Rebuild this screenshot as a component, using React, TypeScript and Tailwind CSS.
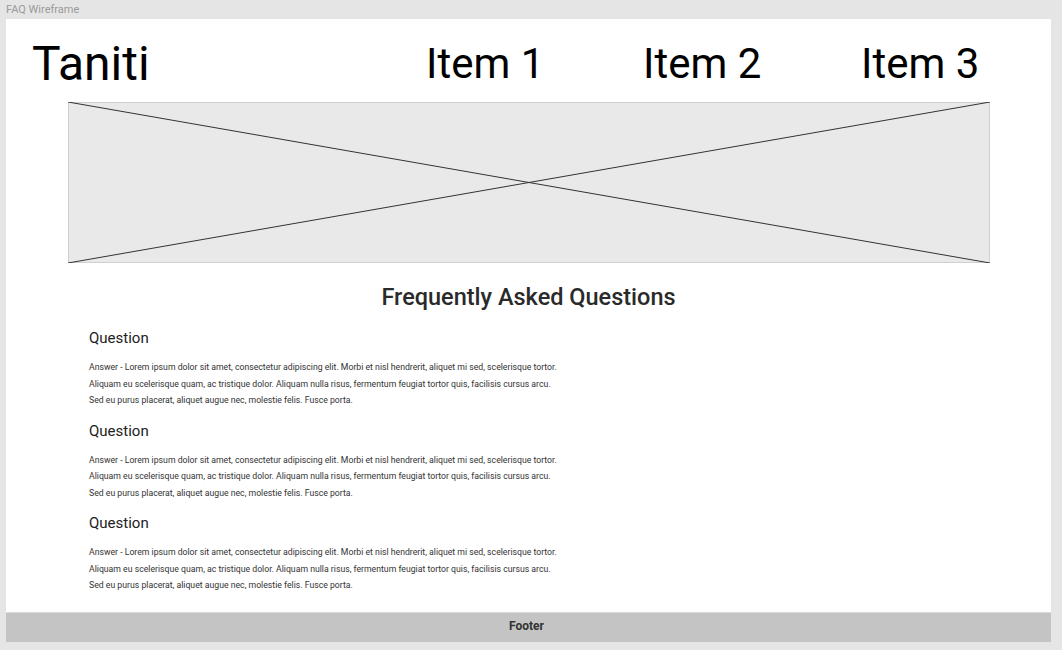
import React from "react";

const answer = [
  "Answer - Lorem ipsum dolor sit amet, consectetur adipiscing elit. Morbi et nisl hendrerit, aliquet mi sed, scelerisque tortor.",
  "Aliquam eu scelerisque quam, ac tristique dolor. Aliquam nulla risus, fermentum feugiat tortor quis, facilisis cursus arcu.",
  "Sed eu purus placerat, aliquet augue nec, molestie felis. Fusce porta.",
];

function QA() {
  return (
    <div className="flex flex-col shrink-0">
      <div className="text-[15px] leading-[20px] font-normal text-[#222]">Question</div>
      <div className="mt-[11px] flex flex-col text-[8.7px] leading-[16.5px] text-[#333]">
        {answer.map((l, i) => (
          <div key={i}>{l}</div>
        ))}
      </div>
    </div>
  );
}

export default function App() {
  return (
    <div
      className="w-[1062px] h-[650px] bg-[#e5e5e5] flex flex-col overflow-hidden"
      style={{ fontFamily: "Roboto, 'Noto Sans', sans-serif" }}
    >
      <div className="h-[19px] shrink-0 pl-[6px] pt-[3px] text-[11px] leading-[14px] text-[#9a9a9a]">FAQ Wireframe</div>
      <div className="ml-[6px] w-[1045px] h-[623px] shrink-0 bg-white flex flex-col">
        <div className="flex items-start h-[83px] shrink-0 pt-[19px]">
          <div className="ml-[26px] w-[394px] text-[48px] leading-[52px] text-black">Taniti</div>
          <div className="w-[217px] text-[42px] leading-[52px] text-black">Item 1</div>
          <div className="w-[218px] text-[42px] leading-[52px] text-black">Item 2</div>
          <div className="text-[42px] leading-[52px] text-black">Item 3</div>
        </div>
        <div className="ml-[62px] w-[922px] h-[161px] shrink-0 bg-[#e9e9e9] border border-[#d0d0d0] relative">
          <svg className="absolute -inset-px" width="922" height="161" viewBox="0 0 922 161" preserveAspectRatio="none">
            <line x1="0" y1="0" x2="922" y2="161" stroke="#333" strokeWidth="1" />
            <line x1="0" y1="161" x2="922" y2="0" stroke="#333" strokeWidth="1" />
          </svg>
        </div>
        <div className="mt-[19px] shrink-0 text-center text-[23.5px] leading-[30px] font-medium text-[#2a2a2a]">
          Frequently Asked Questions
        </div>
        <div className="ml-[83px] mt-[16px] flex flex-col gap-[12px]">
          <QA />
          <QA />
          <QA />
        </div>
        <div className="mt-auto h-[30px] shrink-0 bg-[#c4c4c4] border-t border-[#dadada] flex items-center justify-center pb-[3px] pr-[4px] text-[12px] font-bold text-[#333]">
          Footer
        </div>
      </div>
    </div>
  );
}
